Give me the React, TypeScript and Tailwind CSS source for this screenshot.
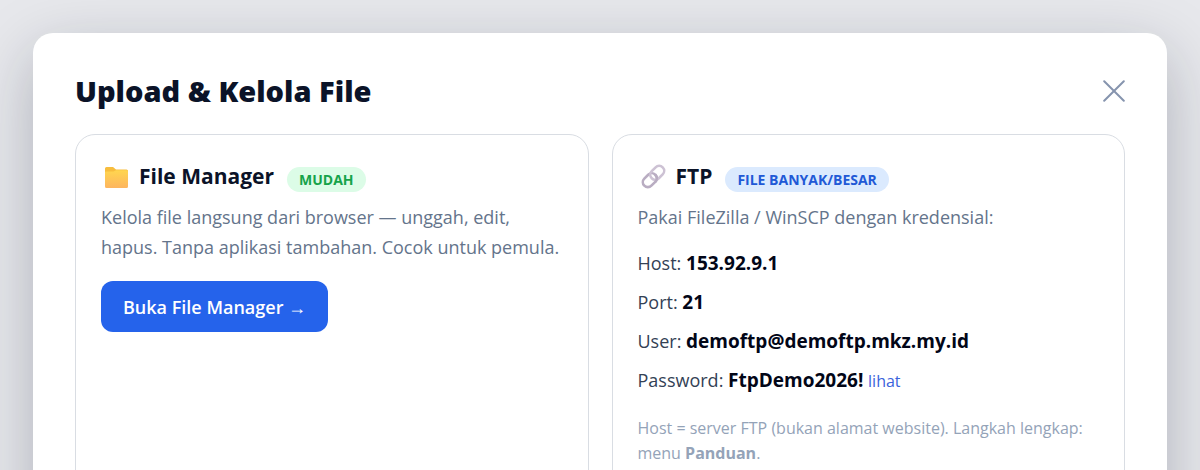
import { JSX, ReactNode, useState } from "react";

/* ================= DATA ================= */

interface Credential {
  label: string;
  value: string;
}

const credentials: Credential[] = [
  { label: "Host", value: "153.92.9.1" },
  { label: "Port", value: "21" },
  { label: "User", value: "demoftp@demoftp.mkz.my.id" },
];

const password = "FtpDemo2026!";

/* ================= PAGE ================= */

export default function App() {
  const [open, setOpen] = useState(true);
  const [visible, setVisible] = useState(true);

  return (
    <div className="h-screen overflow-hidden bg-[#e7e8ec] p-[33px] font-['Open_Sans','Noto_Sans',sans-serif] text-[#0b1328]">
      {open && (
        <section
          aria-labelledby="modal-title"
          className="flex min-h-[560px] flex-col rounded-[20px] bg-white px-[42px] pt-[38px] pb-10 shadow-[0_20px_64px_rgba(15,23,42,0.26)]"
        >
          {/* ================= HEADER ================= */}
          <header className="flex h-10 items-center justify-between">
            <h1 id="modal-title" className="text-[29px] font-extrabold">
              Upload &amp; Kelola File
            </h1>
            <button
              type="button"
              aria-label="Tutup"
              onClick={() => setOpen(false)}
              className="text-[#8694ae]"
            >
              <svg
                viewBox="0 0 22 22"
                className="size-[22px]"
                fill="none"
                stroke="currentColor"
                strokeWidth="2"
                strokeLinecap="round"
              >
                <path d="M1.200 1.200 20.800 20.800M20.800 1.200 1.200 20.800" />
              </svg>
            </button>
          </header>

          <div className="mt-[23px] grid flex-1 grid-cols-2 gap-[23px]">
            {/* ================= FILE MANAGER ================= */}
            <Card
              icon={<FolderIcon />}
              title="File Manager"
              badge="MUDAH"
              badgeClass="bg-[#dcfce7] text-[#16a34a]"
            >
              <p className="mt-2 text-lg leading-[30px] text-[#64748b]">
                Kelola file langsung dari browser — unggah, edit, hapus. Tanpa
                aplikasi tambahan. Cocok untuk pemula.
              </p>
              <button
                type="button"
                className="mt-[19px] h-[51px] rounded-xl bg-[#2563eb] px-[22px] text-lg font-semibold text-white"
              >
                Buka File Manager →
              </button>
            </Card>

            {/* ================= FTP ================= */}
            <Card
              icon={<LinkIcon />}
              title="FTP"
              badge="FILE BANYAK/BESAR"
              badgeClass="bg-[#dbeafe] text-[#2159d6]"
            >
              <p className="mt-2 text-lg leading-[30px] text-[#64748b]">
                Pakai FileZilla / WinSCP dengan kredensial:
              </p>
              <ul className="mt-3 text-lg leading-[39px] text-[#334155]">
                {credentials.map((c) => (
                  <li key={c.label}>
                    {c.label}:{" "}
                    <b className="text-[19px] text-[#020617]">{c.value}</b>
                  </li>
                ))}
                <li>
                  Password:{" "}
                  <b className="text-[19px] text-[#020617]">
                    {visible ? password : "••••••••"}
                  </b>{" "}
                  <button
                    type="button"
                    onClick={() => setVisible(!visible)}
                    className="text-base text-[#3b63dc]"
                  >
                    lihat
                  </button>
                </li>
              </ul>
              <p className="mt-4 text-base leading-[25px] text-[#94a3b8]">
                Host = server FTP (bukan alamat website). Langkah lengkap: menu{" "}
                <b>Panduan</b>.
              </p>
            </Card>
          </div>
        </section>
      )}
    </div>
  );
}

/* ================= SMALL COMPONENTS ================= */

function Card({
  icon,
  title,
  badge,
  badgeClass,
  children,
}: {
  icon: JSX.Element;
  title: string;
  badge: string;
  badgeClass: string;
  children: ReactNode;
}) {
  return (
    <article className="rounded-[20px] border border-[#d9dde3] px-[25px] pt-[25px] pb-6">
      <div className="flex h-[34px] items-center">
        {icon}
        <h2 className="ml-2 text-[21px] font-bold">{title}</h2>
        <span
          className={`ml-[13px] mt-1 rounded-full px-3 text-sm leading-[25px] font-bold ${badgeClass}`}
        >
          {badge}
        </span>
      </div>
      {children}
    </article>
  );
}

function FolderIcon() {
  return (
    <svg viewBox="0 0 30 30" className="size-[30px]" aria-hidden="true">
      <defs>
        <linearGradient id="folder" x1="0" y1="0" x2="0" y2="1">
          <stop offset="0" stopColor="#ffd64f" />
          <stop offset="1" stopColor="#fdb55f" />
        </linearGradient>
      </defs>
      <path
        d="M4 6.500a1.500 1.500 0 0 1 1.500-1.500h6.500l3 2.500h10.500a1.500 1.500 0 0 1 1.500 1.500v5H4Z"
        fill="#f7bd3e"
      />
      <path
        d="M4 10.500a1 1 0 0 1 1-1h7.500l2.500-1.300h10.500a1.500 1.500 0 0 1 1.500 1.500v14.800a1.500 1.500 0 0 1-1.500 1.500H5.500a1.500 1.500 0 0 1-1.500-1.500Z"
        fill="url(#folder)"
      />
    </svg>
  );
}

function LinkIcon() {
  return (
    <svg
      viewBox="0 0 30 30"
      className="size-[30px]"
      fill="none"
      strokeWidth="2.6"
      aria-hidden="true"
    >
      <g transform="rotate(-45 15.5 14.5)">
        <rect x="2.500" y="9.500" width="15.500" height="10" rx="5" stroke="#b9adc2" />
        <rect x="13" y="9.500" width="15.500" height="10" rx="5" stroke="#cdc2d4" />
        <path d="M13 19.500a5 5 0 0 0 5-5" stroke="#b9adc2" />
      </g>
    </svg>
  );
}
